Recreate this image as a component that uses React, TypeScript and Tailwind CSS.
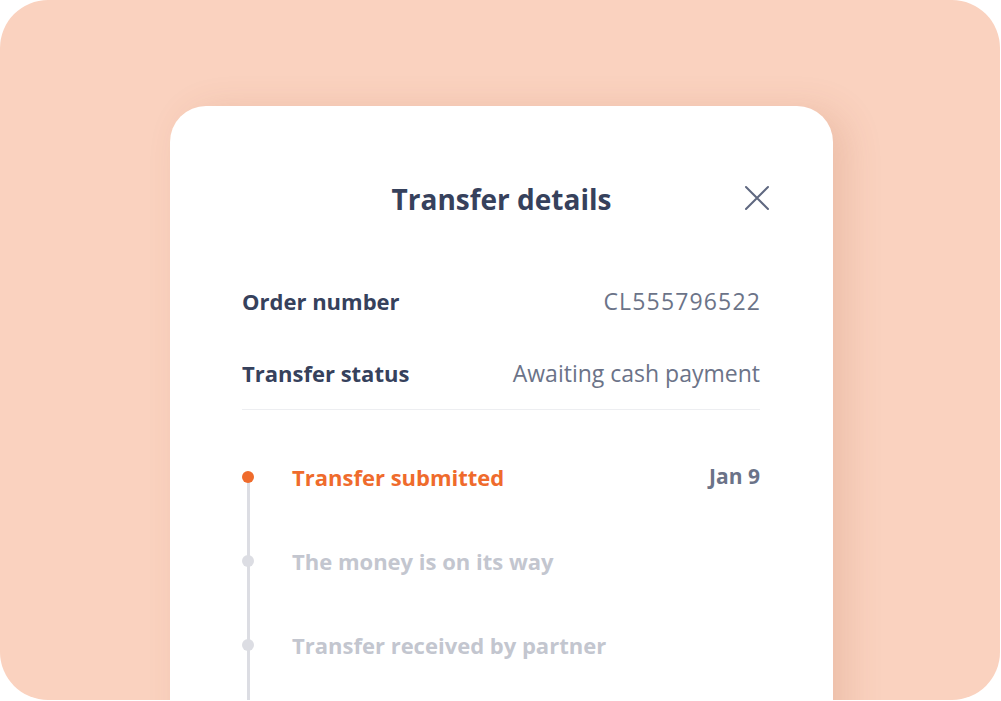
import React from "react";

const font = { fontFamily: "'Open Sans', 'Noto Sans', sans-serif" };

function Step({ label, active, date }: { label: string; active?: boolean; date?: string }) {
  return (
    <div className="flex items-center h-[36px]">
      <div className="w-[12px] flex justify-center">
        <div
          className={
            active
              ? "w-[12px] h-[12px] rounded-full bg-[#ef6b2c]"
              : "w-[12px] h-[12px] rounded-full bg-[#dcdde3]"
          }
        />
      </div>
      <div
        className={
          active
            ? "ml-[38px] flex-1 text-[22px] font-bold text-[#ef6b2c]"
            : "ml-[38px] flex-1 text-[22px] font-bold text-[#c3c6cf]"
        }
      >
        {label}
      </div>
      {date && <div className="text-[21px] font-bold text-[#6b7388]">{date}</div>}
    </div>
  );
}

export default function App() {
  return (
    <div className="w-[1001px] h-[701px] bg-white" style={font}>
      <div className="w-[1000px] h-[700px] rounded-[48px] bg-[#fad2bf] overflow-hidden pl-[170px] pt-[106px]">
        <div className="w-[663px] h-[640px] bg-white rounded-t-[36px] shadow-[14px_4px_36px_rgba(170,90,50,0.16)] flex flex-col">
          <div className="relative pt-[75px]">
            <div className="h-[36px] flex items-center justify-center text-[28px] font-bold text-[#36415c]">
              Transfer details
            </div>
            <svg
              className="absolute right-[63px] top-[79px]"
              width="26"
              height="26"
              viewBox="0 0 26 26"
              fill="none"
              stroke="#5f6880"
              strokeWidth="2"
              strokeLinecap="round"
            >
              <path d="M2 2 L24 24 M24 2 L2 24" />
            </svg>
          </div>
          <div className="pl-[72px] pr-[73px] flex flex-col flex-1">
            <div className="mt-[66px] h-[36px] flex items-center justify-between">
              <span className="text-[22px] font-bold text-[#36415c]">Order number</span>
              <span className="text-[23px] tracking-[0.05em] mr-[-1px] text-[#6b7388]">CL555796522</span>
            </div>
            <div className="mt-[36px] h-[36px] flex items-center justify-between">
              <span className="text-[22px] font-bold text-[#36415c]">Transfer status</span>
              <span className="text-[23px] text-[#6b7388]">Awaiting cash payment</span>
            </div>
            <div className="mt-[18px] h-px bg-[#edeef1]" />
            <div className="relative mt-[49px] flex-1 flex flex-col gap-[48px]">
              <div className="absolute left-[4.5px] w-[3px] top-[18px] bottom-0 bg-[#dcdde3]" />
              <div className="relative flex flex-col gap-[48px]">
                <Step label="Transfer submitted" active date="Jan 9" />
                <Step label="The money is on its way" />
                <Step label="Transfer received by partner" />
              </div>
            </div>
          </div>
        </div>
      </div>
    </div>
  );
}
